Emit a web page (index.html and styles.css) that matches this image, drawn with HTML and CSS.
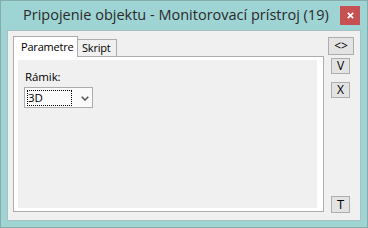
FILE: index.html
```html
<!DOCTYPE html>
<html>
<head>
<meta charset="utf-8">
<link rel="stylesheet" href="styles.css">
</head>
<body>
<div class="window">
  <div class="titlebar">
    <span class="title">Pripojenie objektu - Monitorovací prístroj (19)</span>
    <span class="close"><svg width="7" height="7" viewBox="0 0 7 7"><path d="M0.8 0.8 L6.2 6.2 M6.2 0.8 L0.8 6.2" stroke="#fff" stroke-width="1.7" fill="none"/></svg></span>
  </div>
  <div class="content">
    <div class="tabs-area">
      <div class="tabstrip">
        <div class="tab active">Parametre</div>
        <div class="tab inactive">Skript</div>
      </div>
      <div class="panel">
        <div class="page">
          <div class="label">Rámik:</div>
          <div class="select">
            <span class="focus">3D</span>
            <svg class="chev" width="8" height="5" viewBox="0 0 8 5"><path d="M0.7 0.7 L4 4 L7.3 0.7" stroke="#5a5a5a" stroke-width="1.6" fill="none"/></svg>
          </div>
        </div>
      </div>
    </div>
    <div class="side">
      <div class="btn wide">&lt;&gt;</div>
      <div class="btn v">V</div>
      <div class="btn x">X</div>
      <div class="btn t">T</div>
    </div>
  </div>
</div>
</body>
</html>
```
FILE: styles.css
```css
html, body { margin: 0; padding: 0; }
body { font-family: "Open Sans", "Noto Sans", sans-serif; }
.window {
  width: 368px; height: 228px; box-sizing: border-box;
  border: 1px solid #85abab; background: #9fd4d4;
  padding: 0 6px 6px 6px;
  display: flex; flex-direction: column;
}
.titlebar { height: 29px; display: flex; align-items: flex-start; flex: none; }
.title {
  font-size: 14.5px; line-height: 20px; color: #2a2a2a;
  margin: 4px 0 0 16px; white-space: nowrap;
}
.close {
  margin-left: auto; margin-top: 5px; margin-right: 1px;
  width: 20px; height: 19px; background: #c75050;
  display: flex; align-items: center; justify-content: center;
}
.close svg { display: block; }
.content {
  flex: 1; border: 1px solid #a9c0c0; background: #f0f0f0;
  display: flex; padding: 5px 2px 8px 5px;
}
.tabs-area { width: 311px; display: flex; flex-direction: column; flex: none; }
.tabstrip { height: 20px; display: flex; align-items: flex-end; flex: none; }
.tab {
  box-sizing: border-box; border: 1px solid #adadad; border-bottom: none;
  font-size: 11px; letter-spacing: -0.2px; color: #000; white-space: nowrap;
}
.tab.active {
  width: 65px; height: 21px; margin-bottom: -1px; background: #fff;
  position: relative; z-index: 1;
  padding: 2px 0 0 7px; line-height: 16px;
}
.tab.inactive {
  width: 39px; height: 17px; background: #f0f0f0; border-left: none;
  padding: 0 0 0 4px; line-height: 16px;
}
.panel {
  flex: 1; border: 1px solid #adadad; background: #fff;
  padding: 3px 6px 3px 4px; display: flex;
}
.page { flex: 1; background: #f0f0f0; padding: 9px 6px 0 6px; }
.label { font-size: 11.5px; line-height: 15px; color: #000; margin-left: 1px; letter-spacing: -0.1px; }
.select {
  margin-top: 3px; width: 69px; height: 21px; box-sizing: border-box;
  border: 1px solid #acacac; background: #fafafa;
  display: flex; align-items: center;
}
.focus {
  box-sizing: border-box; width: 45px; height: 16px; margin-left: 2px;
  border: 1px dotted #000; font-size: 11.5px; line-height: 14px; color: #000;
  padding-left: 0;
}
.chev { margin-left: 9px; margin-top: 2px; display: block; }
.side { width: 34px; display: flex; flex-direction: column; padding-top: 1px; }
.btn {
  box-sizing: border-box; border: 1px solid #adadad; background: #e3e3e3;
  font-size: 12px; color: #000; display: flex; align-items: center; justify-content: center;
  width: 19px; margin-left: 7px; line-height: 1;
}
.btn.wide { width: 26px; height: 18px; margin-left: 4px; font-size: 12px; }
.btn.v { height: 16px; margin-top: 3px; }
.btn.x { height: 16px; margin-top: 8px; }
.btn.t { height: 17px; margin-top: auto; margin-bottom: -1px; font-size: 13px; }
```
